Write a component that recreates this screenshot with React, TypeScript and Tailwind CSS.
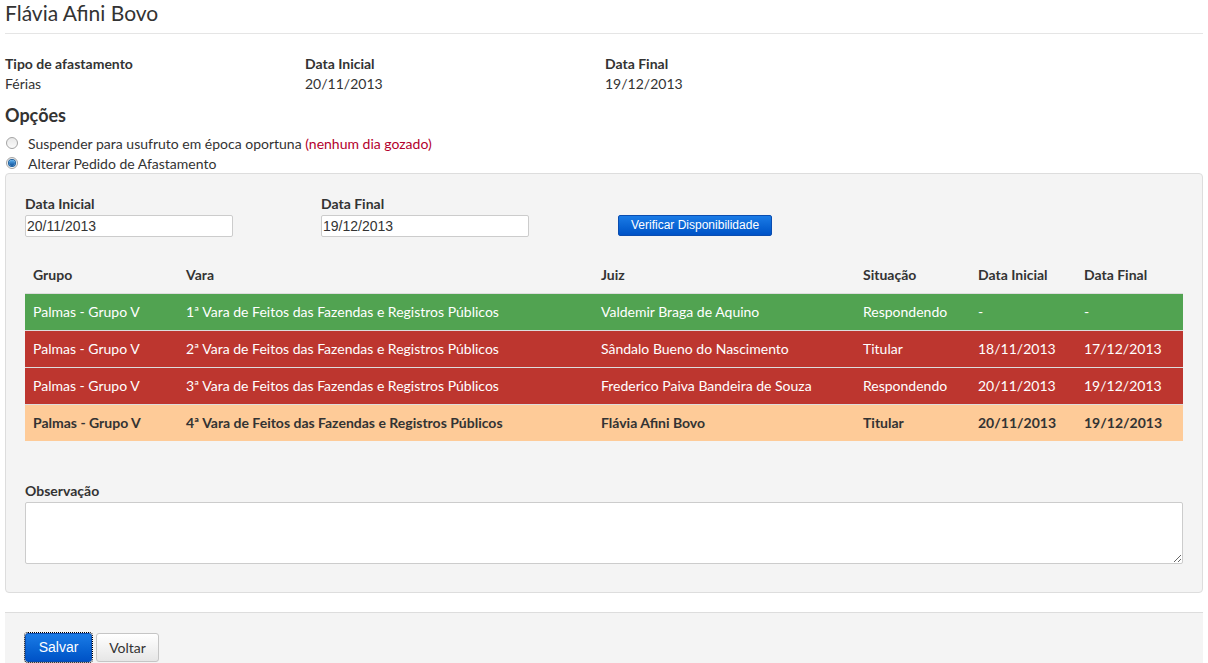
const rows = [
  {
    grupo: "Palmas - Grupo V",
    vara: "1ª Vara de Feitos das Fazendas e Registros Públicos",
    juiz: "Valdemir Braga de Aquino",
    situacao: "Respondendo",
    inicio: "-",
    fim: "-",
    tone: "green",
  },
  {
    grupo: "Palmas - Grupo V",
    vara: "2ª Vara de Feitos das Fazendas e Registros Públicos",
    juiz: "Sândalo Bueno do Nascimento",
    situacao: "Titular",
    inicio: "18/11/2013",
    fim: "17/12/2013",
    tone: "red",
  },
  {
    grupo: "Palmas - Grupo V",
    vara: "3ª Vara de Feitos das Fazendas e Registros Públicos",
    juiz: "Frederico Paiva Bandeira de Souza",
    situacao: "Respondendo",
    inicio: "20/11/2013",
    fim: "19/12/2013",
    tone: "red",
  },
  {
    grupo: "Palmas - Grupo V",
    vara: "4ª Vara de Feitos das Fazendas e Registros Públicos",
    juiz: "Flávia Afini Bovo",
    situacao: "Titular",
    inicio: "20/11/2013",
    fim: "19/12/2013",
    tone: "self",
  },
];

const toneClass: Record<string, string> = {
  green: "bg-[#51a351] text-white",
  red: "bg-[#bd362f] text-white",
  self: "bg-[#fecb98] text-[#333] font-bold",
};

function Radio({ checked }: { checked?: boolean }) {
  return (
    <span className="flex h-[12px] w-[12px] shrink-0 items-center justify-center rounded-full border border-[#a4a4a4] bg-gradient-to-b from-[#e8e8e8] to-[#fafafa]">
      {checked && (
        <span className="h-[6px] w-[6px] rounded-full bg-gradient-to-b from-[#5ab0f0] to-[#0b4f98] ring-1 ring-[#1b5f9e]" />
      )}
    </span>
  );
}

function Field({ label, value, w }: { label: string; value: string; w: string }) {
  return (
    <div className={w}>
      <div className="leading-[20px] font-bold">{label}</div>
      <div className="mt-px flex h-[22px] w-[208px] items-center rounded-[2px] border border-[#ccc] bg-white px-[1px] font-['Liberation_Sans',Arial,sans-serif] text-[14px] text-[#333]">
        {value}
      </div>
    </div>
  );
}

export default function App() {
  return (
    <div className="min-h-[663px] bg-white px-[5px] pt-[2px] font-['Lato','Segoe_UI',sans-serif] text-[14px] text-[#333]">
      <h1 className="border-b border-[#e5e5e5] pb-[9px] text-[21px] leading-[22px] font-normal">
        Flávia Afini Bovo
      </h1>

      {/* resumo do afastamento */}
      <div className="mt-[20px] flex leading-[20px]">
        <div className="w-[300px]">
          <div className="font-bold">Tipo de afastamento</div>
          <div>Férias</div>
        </div>
        <div className="w-[300px]">
          <div className="font-bold">Data Inicial</div>
          <div>20/11/2013</div>
        </div>
        <div>
          <div className="font-bold">Data Final</div>
          <div>19/12/2013</div>
        </div>
      </div>

      <h2 className="mt-[9px] text-[18px] leading-[24px] font-bold">Opções</h2>

      <div className="mt-[6px]">
        <label className="flex h-[20px] items-center gap-[10px] pl-px">
          <Radio />
          <span>
            Suspender para usufruto em época oportuna{" "}
            <span className="text-[#b3002d]">(nenhum dia gozado)</span>
          </span>
        </label>
        <label className="flex h-[20px] items-center gap-[10px] pl-px">
          <Radio checked />
          <span>Alterar Pedido de Afastamento</span>
        </label>
      </div>

      {/* painel de alteração */}
      <div className="rounded-[4px] border border-[#ddd] bg-[#f4f4f4] px-[19px] pt-[20px] pb-[28px]">
        <div className="flex items-end">
          <Field label="Data Inicial" value="20/11/2013" w="w-[296px]" />
          <Field label="Data Final" value="19/12/2013" w="w-[297px]" />
          <button
            type="button"
            className="mb-[1px] h-[21px] rounded-[2px] border border-[#0a4db0] bg-gradient-to-b from-[#1a7be6] to-[#0052c6] px-[12px] font-['Liberation_Sans',Arial,sans-serif] text-[12px] leading-[19px] text-white"
          >
            Verificar Disponibilidade
          </button>
        </div>

        <table className="mt-[19px] w-[1158px] table-fixed border-collapse text-left">
          <colgroup>
            <col className="w-[153px]" />
            <col className="w-[415px]" />
            <col className="w-[262px]" />
            <col className="w-[115px]" />
            <col className="w-[106px]" />
            <col className="w-[107px]" />
          </colgroup>
          <thead>
            <tr className="h-[37px] font-bold">
              <th className="pl-[8px]">Grupo</th>
              <th className="pl-[8px]">Vara</th>
              <th className="pl-[8px]">Juiz</th>
              <th className="pl-[8px]">Situação</th>
              <th className="pl-[8px]">Data Inicial</th>
              <th className="pl-[8px]">Data Final</th>
            </tr>
          </thead>
          <tbody>
            {rows.map((r) => (
              <tr key={r.vara} className={`h-[37px] border-t border-[#ddd] ${toneClass[r.tone]}`}>
                <td className="pl-[8px]">{r.grupo}</td>
                <td className="pl-[8px]">{r.vara}</td>
                <td className="pl-[8px]">{r.juiz}</td>
                <td className="pl-[8px]">{r.situacao}</td>
                <td className="pl-[8px]">{r.inicio}</td>
                <td className="pl-[8px]">{r.fim}</td>
              </tr>
            ))}
          </tbody>
        </table>

        <div className="mt-[40px] leading-[20px] font-bold">Observação</div>
        <textarea className="mt-[1px] block h-[62px] w-[1158px] rounded-[2px] border border-[#ccc] bg-white" />
      </div>

      {/* ações */}
      <div className="mt-[19px] flex h-[51px] gap-[4px] border-t border-[#ddd] bg-[#f4f4f4] px-[20px] pt-[20px]">
        <button
          type="button"
          className="h-[29px] w-[67px] rounded-[3px] border border-[#0a4db0] bg-gradient-to-b from-[#1a7be6] to-[#0052c6] font-['Liberation_Sans',Arial,sans-serif] text-[14px] text-white outline-1 outline-offset-0 outline-black outline-dotted"
        >
          Salvar
        </button>
        <button
          type="button"
          className="h-[29px] w-[63px] rounded-[3px] border border-[#c5c5c5] bg-gradient-to-b from-white to-[#e6e6e6] text-[14px] text-[#333]"
        >
          Voltar
        </button>
      </div>
    </div>
  );
}
